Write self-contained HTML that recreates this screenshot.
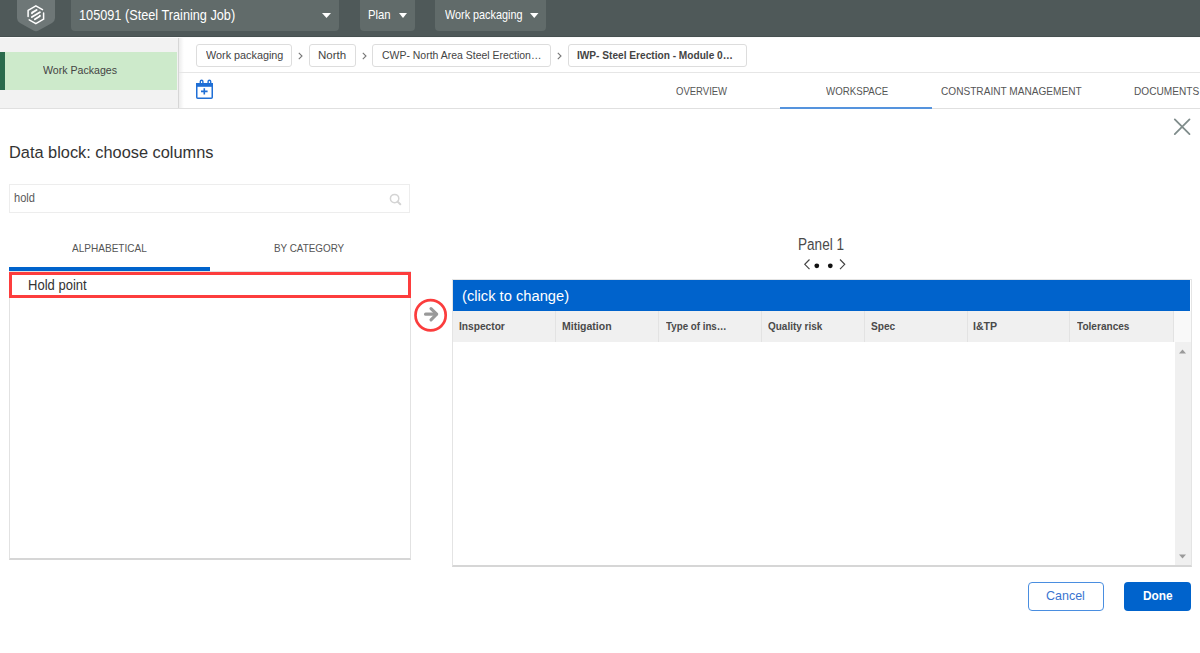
<!DOCTYPE html>
<html><head><meta charset="utf-8"><style>
html,body{margin:0;padding:0;width:1200px;height:653px;overflow:hidden;background:#fff;}
body{position:relative;font-family:"Liberation Sans",sans-serif;}
.b{position:absolute;}
.t{position:absolute;white-space:nowrap;transform-origin:0 0;}
</style></head><body>
<div class="b" style="left:0px;top:0px;width:1200px;height:37px;background:#4f5959;"></div>
<div class="b" style="left:0px;top:36px;width:1200px;height:1px;background:#465050;"></div>
<svg class="b" style="left:0;top:0" width="70" height="37" viewBox="0 0 70 37"><path d="M17 0 H55 V18 Q55 21 52 23 L38.5 30.5 Q36 31.8 33.5 30.5 L20 23 Q17 21 17 18 Z" fill="#6e7777"/><g fill="none" stroke="#fff" stroke-width="1.5" stroke-linecap="round" stroke-linejoin="round"><path d="M42.5 9.65 L35.85 5.8 L28.1 10.3 V16.6"/><path d="M29.2 19.85 L35.85 23.7 L43.6 19.2 V13.1"/></g><g fill="none" stroke="#fff" stroke-width="1.9" stroke-linecap="round" stroke-linejoin="round"><path d="M36.6 10 L32.2 12.6 L32 13.3"/><path d="M31.9 17 L39.9 12.3"/><path d="M34.9 19.2 L39.7 16.3 L39.9 15.6"/></g></svg>
<div class="b" style="left:71px;top:-5px;width:268px;height:36px;background:#616b6a;border-radius:4px;"></div>
<div class="t" style="left:79.45px;top:8.06px;font-size:14.46px;line-height:14.46px;color:#fff;font-weight:normal;transform:scaleX(0.8795);">105091 (Steel Training Job)</div>
<svg class="b" style="left:322px;top:13px" width="9" height="5"><path d="M0 0 H9 L4.5 5 Z" fill="#fff"/></svg>
<div class="b" style="left:360px;top:-5px;width:55px;height:36px;background:#616b6a;border-radius:4px;"></div>
<div class="t" style="left:368.10px;top:9.01px;font-size:12.40px;line-height:12.40px;color:#fff;font-weight:normal;transform:scaleX(0.9108);">Plan</div>
<svg class="b" style="left:398.5px;top:13px" width="8" height="5"><path d="M0 0 H8 L4 5 Z" fill="#fff"/></svg>
<div class="b" style="left:435px;top:-5px;width:111px;height:36px;background:#616b6a;border-radius:4px;"></div>
<div class="t" style="left:444.70px;top:9.01px;font-size:12.40px;line-height:12.40px;color:#fff;font-weight:normal;transform:scaleX(0.8738);">Work packaging</div>
<svg class="b" style="left:530px;top:13px" width="8.5" height="5"><path d="M0 0 H8.5 L4.25 5 Z" fill="#fff"/></svg>
<div class="b" style="left:0px;top:37px;width:178px;height:71px;background:#f2f2f2;"></div>
<div class="b" style="left:0px;top:37px;width:1200px;height:1px;background:#fbfbfb;"></div>
<div class="b" style="left:178px;top:38px;width:1px;height:70px;background:#d6d6d6;"></div>
<div class="b" style="left:179px;top:38px;width:5px;height:70px;background:linear-gradient(to right,rgba(0,0,0,0.07),rgba(0,0,0,0));"></div>
<div class="b" style="left:0px;top:52px;width:177px;height:38px;background:#cdeacb;"></div>
<div class="b" style="left:0px;top:52px;width:4.5px;height:38px;background:#2a6b4c;"></div>
<div class="t" style="left:43.00px;top:64.91px;font-size:11.57px;line-height:11.57px;color:#444;font-weight:normal;transform:scaleX(0.9166);">Work Packages</div>
<div class="b" style="left:0px;top:108px;width:1200px;height:1px;background:#e0e0e0;"></div>
<div class="b" style="left:179px;top:72px;width:1021px;height:1px;background:#e6e6e6;"></div>
<div class="b" style="left:196px;top:44px;width:96px;height:23px;border:1px solid #dddddd;border-radius:3px;box-sizing:border-box;background:#fff;"></div>
<div class="t" style="left:205.80px;top:49.88px;font-size:11.36px;line-height:11.36px;color:#444;font-weight:normal;transform:scaleX(0.9520);">Work packaging</div>
<div class="b" style="left:309px;top:44px;width:47px;height:23px;border:1px solid #dddddd;border-radius:3px;box-sizing:border-box;background:#fff;"></div>
<div class="t" style="left:318.28px;top:49.88px;font-size:11.36px;line-height:11.36px;color:#444;font-weight:normal;transform:scaleX(1.0156);">North</div>
<div class="b" style="left:372px;top:44px;width:179px;height:23px;border:1px solid #dddddd;border-radius:3px;box-sizing:border-box;background:#fff;"></div>
<div class="t" style="left:381.98px;top:49.88px;font-size:11.36px;line-height:11.36px;color:#444;font-weight:normal;transform:scaleX(0.9213);">CWP- North Area Steel Erection…</div>
<div class="b" style="left:568px;top:44px;width:179px;height:23px;border:1px solid #dddddd;border-radius:3px;box-sizing:border-box;background:#fff;"></div>
<div class="t" style="left:576.94px;top:49.88px;font-size:11.36px;line-height:11.36px;color:#444;font-weight:bold;transform:scaleX(0.8913);">IWP- Steel Erection - Module 0…</div>
<svg class="b" style="left:298.3px;top:52px" width="5" height="8"><path d="M0.8 0.8 L4 4 L0.8 7.2" fill="none" stroke="#777" stroke-width="1.1"/></svg>
<svg class="b" style="left:362px;top:52px" width="5" height="8"><path d="M0.8 0.8 L4 4 L0.8 7.2" fill="none" stroke="#777" stroke-width="1.1"/></svg>
<svg class="b" style="left:556.9px;top:52px" width="5" height="8"><path d="M0.8 0.8 L4 4 L0.8 7.2" fill="none" stroke="#777" stroke-width="1.1"/></svg>
<svg class="b" style="left:194px;top:77px" width="22" height="23" viewBox="0 0 22 23"><rect x="2.75" y="6.75" width="15.5" height="14.5" rx="1" fill="none" stroke="#1f6fd6" stroke-width="1.5"/><rect x="2" y="6" width="17" height="3.8" fill="#1f6fd6"/><path d="M6.3 7 V4.5 A1.3 1.3 0 0 1 8.9 4.5 V7 M14.1 7 V4.5 A1.3 1.3 0 0 1 16.7 4.5 V7" fill="none" stroke="#1f6fd6" stroke-width="1.4"/><path d="M10.3 11.2 V17.6 M7 14.4 H13.6" stroke="#1f6fd6" stroke-width="1.6"/></svg>
<div class="t" style="left:675.57px;top:86.06px;font-size:11.16px;line-height:11.16px;color:#555;font-weight:normal;transform:scaleX(0.8526);">OVERVIEW</div>
<div class="t" style="left:825.60px;top:86.06px;font-size:11.16px;line-height:11.16px;color:#555;font-weight:normal;transform:scaleX(0.8690);">WORKSPACE</div>
<div class="t" style="left:940.99px;top:86.06px;font-size:11.16px;line-height:11.16px;color:#555;font-weight:normal;transform:scaleX(0.9057);">CONSTRAINT MANAGEMENT</div>
<div class="t" style="left:1134.19px;top:86.06px;font-size:11.16px;line-height:11.16px;color:#555;font-weight:normal;transform:scaleX(0.9070);">DOCUMENTS</div>
<div class="b" style="left:780px;top:106.8px;width:152px;height:1.8px;background:#5593dd;"></div>
<svg class="b" style="left:1172px;top:117px" width="20" height="20"><path d="M2.8 2.4 L17.5 17.1 M17.5 2.4 L2.8 17.1" stroke="#7f8c8b" stroke-width="1.8" stroke-linecap="round"/></svg>
<div class="t" style="left:8.69px;top:145.01px;font-size:16.53px;line-height:16.53px;color:#333;font-weight:normal;transform:scaleX(0.9898);">Data block: choose columns</div>
<div class="b" style="left:9px;top:184px;width:401px;height:29px;border:1px solid #ededed;box-sizing:border-box;"></div>
<div class="t" style="left:14.38px;top:192.09px;font-size:12.29px;line-height:12.29px;color:#5a5a5a;font-weight:normal;transform:scaleX(0.9034);">hold</div>
<svg class="b" style="left:389px;top:193px" width="13" height="13"><circle cx="5.6" cy="5.6" r="4.2" fill="none" stroke="#d4d4d4" stroke-width="1.5"/><path d="M8.6 8.6 L11.3 11.3" stroke="#d4d4d4" stroke-width="2" stroke-linecap="round"/></svg>
<div class="t" style="left:71.75px;top:243.08px;font-size:11.36px;line-height:11.36px;color:#555;font-weight:normal;transform:scaleX(0.8848);">ALPHABETICAL</div>
<div class="t" style="left:274.01px;top:243.08px;font-size:11.36px;line-height:11.36px;color:#555;font-weight:normal;transform:scaleX(0.8688);">BY CATEGORY</div>
<div class="b" style="left:9px;top:271px;width:402px;height:289px;border:1px solid #e2e2e2;border-bottom:2px solid #d6d6d6;box-sizing:border-box;background:#fff;"></div>
<div class="b" style="left:9px;top:267px;width:201px;height:4px;background:#0063cc;"></div>
<div class="b" style="left:9px;top:272px;width:402px;height:26px;border:3px solid #fd3d3d;box-sizing:border-box;"></div>
<div class="t" style="left:27.66px;top:277.96px;font-size:14.46px;line-height:14.46px;color:#333;font-weight:normal;transform:scaleX(0.9011);">Hold point</div>
<svg class="b" style="left:410px;top:295px" width="42" height="42" viewBox="410 295 42 42"><circle cx="430.6" cy="315.25" r="15.1" fill="#fff" stroke="#fb3d3d" stroke-width="2.7"/><path d="M425.6 314.2 H436" fill="none" stroke="#999" stroke-width="3.2" stroke-linecap="round"/><path d="M431 308.6 L436.7 314.2 L431 319.9" fill="none" stroke="#999" stroke-width="3.1" stroke-linecap="round" stroke-linejoin="round"/></svg>
<div class="t" style="left:797.71px;top:237.05px;font-size:16.84px;line-height:16.84px;color:#4a4a4a;font-weight:normal;transform:scaleX(0.8058);">Panel 1</div>
<svg class="b" style="left:803px;top:258px" width="44" height="13"><path d="M6.5 1.5 L1.8 6.3 L6.5 11.1 M37 1.5 L41.7 6.3 L37 11.1" fill="none" stroke="#444" stroke-width="1.2"/><circle cx="13.8" cy="7.8" r="2.4" fill="#111"/><circle cx="27.3" cy="7.8" r="2.4" fill="#111"/></svg>
<div class="b" style="left:452px;top:279px;width:740px;height:288px;border:1px solid #e4e4e4;border-bottom:2px solid #d6d6d6;box-sizing:border-box;background:#fff;"></div>
<div class="b" style="left:453px;top:280px;width:737px;height:31px;background:#0063cc;"></div>
<div class="t" style="left:462.12px;top:288.28px;font-size:15.49px;line-height:15.49px;color:#fff;font-weight:normal;transform:scaleX(0.9503);">(click to change)</div>
<div class="b" style="left:453px;top:311px;width:721px;height:31px;background:#f0f0f0;"></div>
<div class="b" style="left:1174px;top:311px;width:16.5px;height:31px;background:#f9f9f9;"></div>
<div class="t" style="left:459.04px;top:320.98px;font-size:11.36px;line-height:11.36px;color:#4a4a4a;font-weight:bold;transform:scaleX(0.8960);">Inspector</div>
<div class="t" style="left:561.72px;top:320.98px;font-size:11.36px;line-height:11.36px;color:#4a4a4a;font-weight:bold;transform:scaleX(0.9251);">Mitigation</div>
<div class="t" style="left:665.50px;top:320.98px;font-size:11.36px;line-height:11.36px;color:#4a4a4a;font-weight:bold;transform:scaleX(0.8591);">Type of ins…</div>
<div class="t" style="left:767.60px;top:320.98px;font-size:11.36px;line-height:11.36px;color:#4a4a4a;font-weight:bold;transform:scaleX(0.8784);">Quality risk</div>
<div class="t" style="left:870.65px;top:320.98px;font-size:11.36px;line-height:11.36px;color:#4a4a4a;font-weight:bold;transform:scaleX(0.8913);">Spec</div>
<div class="t" style="left:972.91px;top:320.98px;font-size:11.36px;line-height:11.36px;color:#4a4a4a;font-weight:bold;transform:scaleX(0.9325);">I&amp;TP</div>
<div class="t" style="left:1076.90px;top:320.98px;font-size:11.36px;line-height:11.36px;color:#4a4a4a;font-weight:bold;transform:scaleX(0.8869);">Tolerances</div>
<div class="b" style="left:555px;top:311px;width:1px;height:31px;background:#e3e3e3;"></div>
<div class="b" style="left:658px;top:311px;width:1px;height:31px;background:#e3e3e3;"></div>
<div class="b" style="left:761px;top:311px;width:1px;height:31px;background:#e3e3e3;"></div>
<div class="b" style="left:864px;top:311px;width:1px;height:31px;background:#e3e3e3;"></div>
<div class="b" style="left:967px;top:311px;width:1px;height:31px;background:#e3e3e3;"></div>
<div class="b" style="left:1069px;top:311px;width:1px;height:31px;background:#e3e3e3;"></div>
<div class="b" style="left:1173px;top:311px;width:1px;height:31px;background:#e3e3e3;"></div>
<div class="b" style="left:1175px;top:342px;width:16px;height:222.5px;background:#f0f0f0;"></div>
<svg class="b" style="left:1179px;top:348.5px" width="7" height="5"><path d="M0 4.5 L3.5 0.5 L7 4.5 Z" fill="#9a9a9a"/></svg>
<svg class="b" style="left:1179px;top:554px" width="7" height="5"><path d="M0 0.5 L3.5 4.5 L7 0.5 Z" fill="#9a9a9a"/></svg>
<div class="b" style="left:1028px;top:582px;width:76px;height:29px;border:1px solid #4a8ee0;border-radius:4px;box-sizing:border-box;"></div>
<div class="t" style="left:1046.38px;top:588.83px;font-size:13.43px;line-height:13.43px;color:#3a74d0;font-weight:normal;transform:scaleX(0.9308);">Cancel</div>
<div class="b" style="left:1124px;top:582px;width:67px;height:29px;background:#0063cc;border-radius:4px;"></div>
<div class="t" style="left:1142.93px;top:588.83px;font-size:13.43px;line-height:13.43px;color:#fff;font-weight:bold;transform:scaleX(0.8824);">Done</div>
</body></html>
